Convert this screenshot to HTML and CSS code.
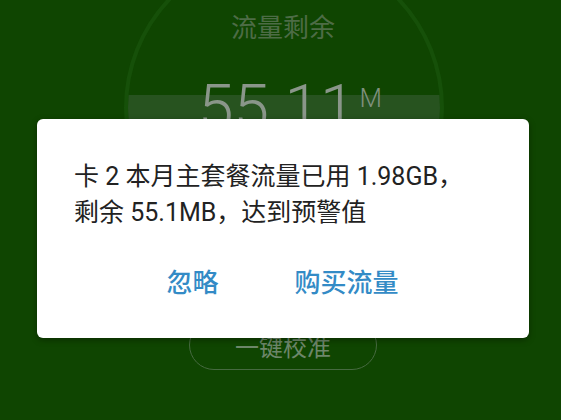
FILE: index.html
```html
<!DOCTYPE html>
<html lang="zh-CN">
<head>
<meta charset="utf-8">
<title>流量剩余</title>
<link rel="stylesheet" href="styles.css">
</head>
<body>
<div class="screen">
  <div class="gauge-ring"><div class="gauge-fill"></div></div>
  <div class="title">流量剩余</div>
  <div class="amount">
    <span class="amount-num">55.11</span>
    <span class="amount-unit">M</span>
  </div>
  <div class="calibrate">一键校准</div>

  <div class="dialog">
    <p class="dialog-msg">卡 2 本月主套餐流量已用 1.98GB，<br>剩余 55.1MB，达到预警值</p>
    <div class="dialog-actions">
      <span class="dialog-btn">忽略</span>
      <span class="dialog-btn">购买流量</span>
    </div>
  </div>
</div>
</body>
</html>
```

FILE: styles.css
```css
html, body {
  margin: 0;
  padding: 0;
  background: #0f4501;
}

.screen {
  position: relative;
  width: 561px;
  height: 420px;
  overflow: hidden;
  box-sizing: border-box;
  padding: 15px 0 50px 5px;
  display: flex;
  flex-direction: column;
  align-items: center;
  background: #0f4501;
  font-family: Roboto, "Noto Sans CJK SC", sans-serif;
}

.gauge-ring {
  position: absolute;
  left: 124px;
  top: -52px;
  width: 320px;
  height: 320px;
  box-sizing: border-box;
  border-radius: 50%;
  border: 4px solid #165009;
  overflow: hidden;
}

.gauge-fill {
  position: absolute;
  left: 0;
  right: 0;
  top: 143px;
  bottom: 0;
  background: #27531f;
}

.title {
  position: relative;
  font-size: 26px;
  line-height: 26px;
  color: #4d6c46;
}

.amount {
  position: relative;
  display: flex;
  align-items: flex-start;
  margin-top: 36px;
  margin-left: 14px;
}

.amount-num {
  font-family: Roboto, sans-serif;
  font-weight: 300;
  font-size: 64px;
  line-height: 64px;
  color: #8a968a;
}

.amount-unit {
  font-family: Roboto, sans-serif;
  font-weight: 300;
  font-size: 26px;
  line-height: 26px;
  margin-top: 8px;
  margin-left: 4px;
  color: #7f907d;
}

.calibrate {
  position: relative;
  margin-top: auto;
  width: 188px;
  height: 50px;
  box-sizing: border-box;
  border: 1.5px solid #466a40;
  border-radius: 25px;
  display: flex;
  align-items: center;
  justify-content: center;
  font-size: 24px;
  color: #6d876a;
}

.dialog {
  position: absolute;
  left: 37px;
  top: 119px;
  width: 492px;
  height: 219px;
  box-sizing: border-box;
  padding: 40px 40px 0 37px;
  background: #ffffff;
  border-radius: 6px;
  box-shadow: 0 2px 6px rgba(0, 0, 0, 0.35);
}

.dialog-msg {
  margin: 0;
  font-size: 25px;
  line-height: 36px;
  color: #222222;
  white-space: nowrap;
}

.dialog-actions {
  margin-top: 34px;
  margin-left: 2px;
  display: flex;
  justify-content: center;
  gap: 76px;
}

.dialog-btn {
  font-size: 26px;
  line-height: 36px;
  font-weight: 500;
  color: #338bc6;
}
```
